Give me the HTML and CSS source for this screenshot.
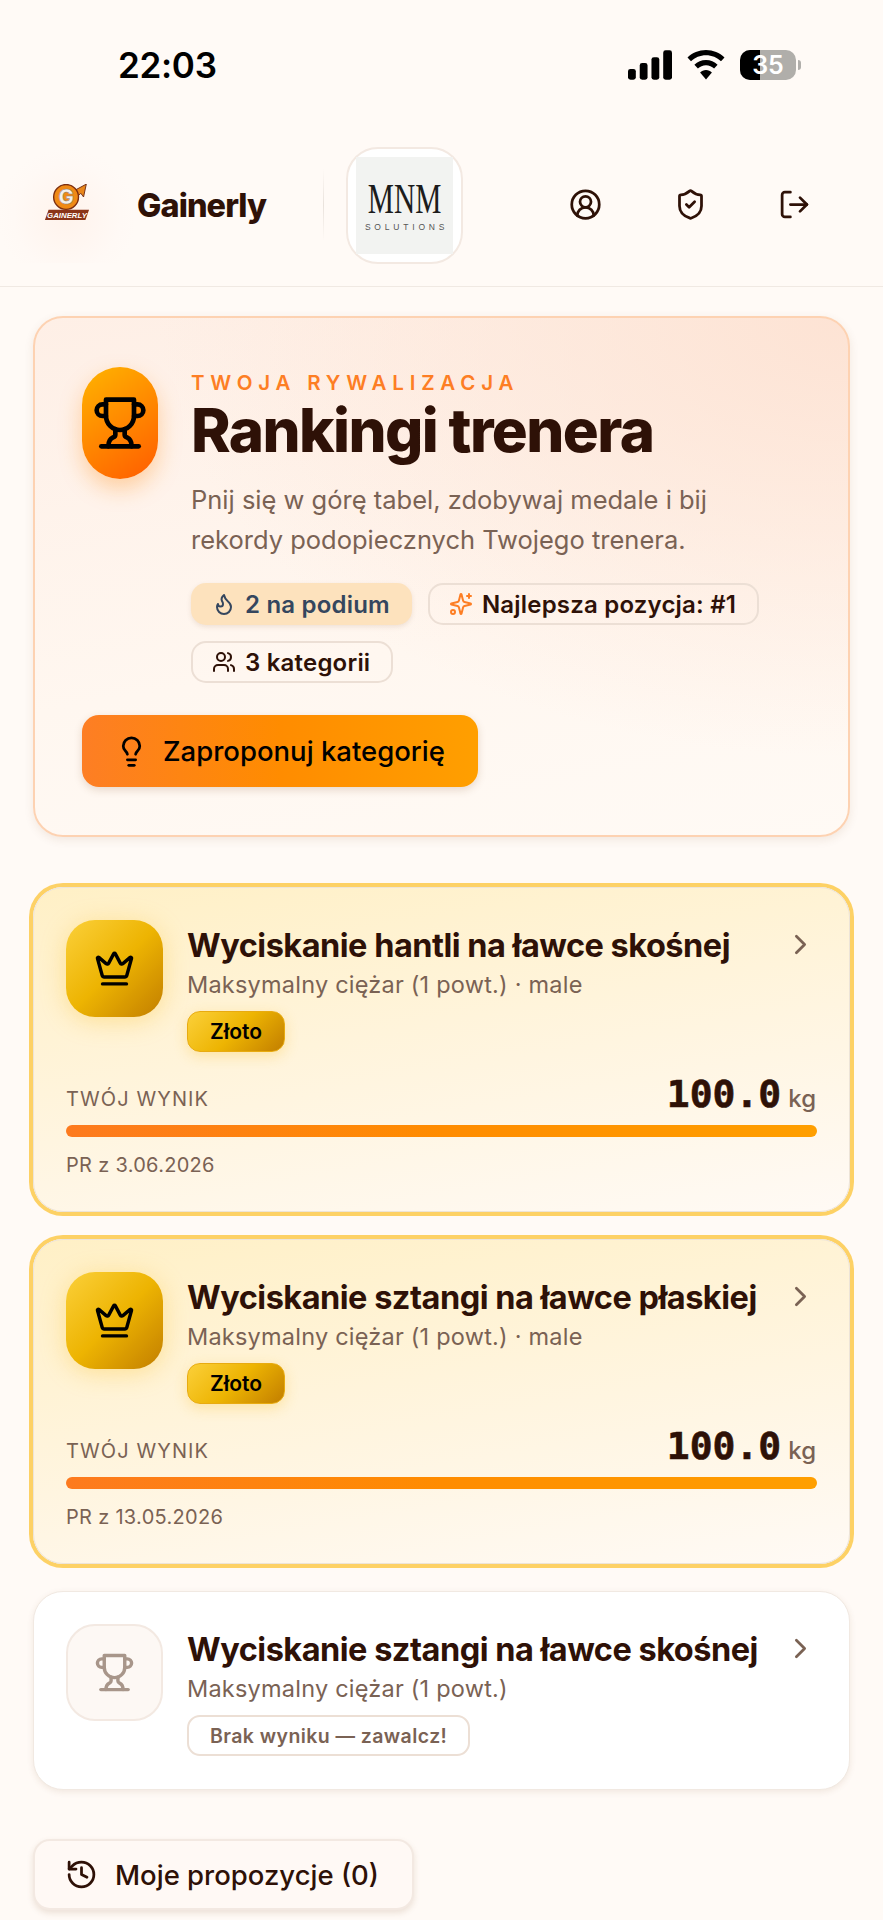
FILE: index.html
```html
<!DOCTYPE html>
<html lang="pl">
<head>
<meta charset="utf-8">
<title>Rankingi trenera</title>
<link rel="stylesheet" href="styles.css">
</head>
<body>
<svg class="defs" aria-hidden="true">
  <symbol id="trophy" viewBox="0 0 24 24"><path d="M6 9H4.5a2.5 2.5 0 0 1 0-5H6"/><path d="M18 9h1.5a2.5 2.5 0 0 0 0-5H18"/><path d="M4 22h16"/><path d="M10 14.66V17c0 .55-.47.98-.97 1.21C7.85 18.75 7 20.24 7 22"/><path d="M14 14.66V17c0 .55.47.98.97 1.21C16.15 18.75 17 20.24 17 22"/><path d="M18 2H6v7a6 6 0 0 0 12 0V2Z"/></symbol>
  <symbol id="crown" viewBox="0 0 24 24"><path d="M11.562 3.266a.5.5 0 0 1 .876 0L15.39 8.87a1 1 0 0 0 1.516.294L21.183 5.5a.5.5 0 0 1 .798.519l-2.834 10.246a1 1 0 0 1-.956.734H5.81a1 1 0 0 1-.957-.734L2.02 6.02a.5.5 0 0 1 .798-.519l4.276 3.664a1 1 0 0 0 1.516-.294z"/><path d="M5 21h14"/></symbol>
  <symbol id="chevron" viewBox="0 0 24 24"><path d="m9 18 6-6-6-6"/></symbol>
  <symbol id="flame" viewBox="0 0 24 24"><path d="M8.5 14.5A2.5 2.5 0 0 0 11 12c0-1.38-.5-2-1-3-1.072-2.143-.224-4.054 2-6 .5 2.5 2 4.9 4 6.5 2 1.6 3 3.5 3 5.5a7 7 0 1 1-14 0c0-1.153.433-2.294 1-3a2.5 2.5 0 0 0 2.5 2.5z"/></symbol>
  <symbol id="sparkles" viewBox="0 0 24 24"><path d="M9.937 15.5A2 2 0 0 0 8.5 14.063l-6.135-1.582a.5.5 0 0 1 0-.962L8.5 9.936A2 2 0 0 0 9.937 8.5l1.582-6.135a.5.5 0 0 1 .963 0L14.063 8.5A2 2 0 0 0 15.5 9.937l6.135 1.581a.5.5 0 0 1 0 .964L15.5 14.063a2 2 0 0 0-1.437 1.437l-1.582 6.135a.5.5 0 0 1-.963 0z"/><path d="M20 2v4"/><path d="M22 4h-4"/><circle cx="4" cy="20" r="2"/></symbol>
  <symbol id="users" viewBox="0 0 24 24"><path d="M16 21v-2a4 4 0 0 0-4-4H6a4 4 0 0 0-4 4v2"/><circle cx="9" cy="7" r="4"/><path d="M22 21v-2a4 4 0 0 0-3-3.87"/><path d="M16 3.13a4 4 0 0 1 0 7.75"/></symbol>
  <symbol id="bulb" viewBox="0 0 24 24"><path d="M15 14c.2-1 .7-1.7 1.5-2.5 1-.9 1.5-2.2 1.5-3.5A6 6 0 0 0 6 8c0 1 .2 2.2 1.5 3.5.7.7 1.3 1.5 1.5 2.5"/><path d="M9 18h6"/><path d="M10 22h4"/></symbol>
  <symbol id="history" viewBox="0 0 24 24"><path d="M3 12a9 9 0 1 0 9-9 9.75 9.75 0 0 0-6.74 2.74L3 8"/><path d="M3 3v5h5"/><path d="M12 7v5l4 2"/></symbol>
  <symbol id="user" viewBox="0 0 24 24"><path d="M18 20a6 6 0 0 0-12 0"/><circle cx="12" cy="10" r="4"/><circle cx="12" cy="12" r="10"/></symbol>
  <symbol id="shield" viewBox="0 0 24 24"><path d="M20 13c0 5-3.5 7.5-7.66 8.95a1 1 0 0 1-.67-.01C7.5 20.5 4 18 4 13V6a1 1 0 0 1 1-1c2 0 4.5-1.2 6.24-2.72a1.17 1.17 0 0 1 1.52 0C14.51 3.81 17 5 19 5a1 1 0 0 1 1 1z"/><path d="m9 12 2 2 4-4"/></symbol>
  <symbol id="logout" viewBox="0 0 24 24"><path d="M9 21H5a2 2 0 0 1-2-2V5a2 2 0 0 1 2-2h4"/><path d="m16 17 5-5-5-5"/><path d="M21 12H9"/></symbol>
</svg>

<div class="status">
  <span class="time">22:03</span>
  <div class="status-icons">
    <svg class="signal" viewBox="0 0 45 30"><rect x="0" y="19" width="8" height="11" rx="2.5"/><rect x="12" y="13" width="8" height="17" rx="2.5"/><rect x="24" y="7" width="8" height="23" rx="2.5"/><rect x="36" y="0" width="9" height="30" rx="2.5"/></svg>
    <svg class="wifi" viewBox="0 0 38 30"><path d="M19 0C11.800 0 5.300 2.800.5 7.400L4 11.200C7.900 7.500 13.200 5.200 19 5.200S30.100 7.500 34 11.200l3.500-3.800C32.700 2.800 26.200 0 19 0z"/><path d="M19 10c-4.500 0-8.600 1.800-11.600 4.700l3.500 3.800c2.100-2 4.900-3.300 8.100-3.300s6 1.300 8.100 3.300l3.500-3.800C27.600 11.800 23.500 10 19 10z"/><path d="M19 20c-2.300 0-4.400.9-5.900 2.400L19 29.500l5.900-7.100C23.400 20.900 21.300 20 19 20z"/></svg>
    <div class="battery"><div class="bat-body"><div class="bat-fill"></div><span class="bat-num">35</span></div><div class="bat-cap"></div></div>
  </div>
</div>

<header class="topbar">
  <div class="brand">
    <div class="brand-logo">
      <svg class="g-logo" viewBox="0 0 50 40">
        <path class="g-arrow" d="M33 7 L46 0 L43 14 L40 10 L33 17z"/>
        <circle class="g-ring" cx="24" cy="14" r="13.500"/>
        <text class="g-letter" x="24" y="22" text-anchor="middle">G</text>
        <path class="g-banner" d="M5 28H49L45 39H1z"/>
        <text class="g-name" x="25" y="36.800" text-anchor="middle">GAINERLY</text>
      </svg>
    </div>
    <span class="brand-name">Gainerly</span>
  </div>
  <div class="divider"></div>
  <div class="gym-logo">
    <div class="gym-inner">
      <span class="mnm">MNM</span>
      <span class="solutions">SOLUTIONS</span>
    </div>
  </div>
  <nav class="nav-icons">
    <svg class="ic nav-ic"><use href="#user"/></svg>
    <svg class="ic nav-ic"><use href="#shield"/></svg>
    <svg class="ic nav-ic"><use href="#logout"/></svg>
  </nav>
</header>

<main class="content">
  <section class="hero">
    <div class="hero-top">
      <div class="hero-icon"><svg class="ic hero-ic"><use href="#trophy"/></svg></div>
      <div class="hero-text">
        <div class="eyebrow">TWOJA RYWALIZACJA</div>
        <h1 class="hero-title">Rankingi trenera</h1>
        <p class="hero-sub">Pnij się w górę tabel, zdobywaj medale i bij rekordy podopiecznych Twojego trenera.</p>
        <div class="chips">
          <span class="chip chip-fill"><svg class="ic chip-ic"><use href="#flame"/></svg>2 na podium</span>
          <span class="chip"><svg class="ic chip-ic chip-orange"><use href="#sparkles"/></svg>Najlepsza pozycja: #1</span>
          <span class="chip"><svg class="ic chip-ic"><use href="#users"/></svg>3 kategorii</span>
        </div>
      </div>
    </div>
    <button class="btn-primary"><svg class="ic btn-ic"><use href="#bulb"/></svg>Zaproponuj kategorię</button>
  </section>

  <div class="cards">
    <article class="card card-gold">
      <div class="card-head">
        <div class="medal medal-gold"><svg class="ic medal-ic"><use href="#crown"/></svg></div>
        <div class="card-info">
          <h2 class="card-title">Wyciskanie hantli na ławce skośnej</h2>
          <div class="card-sub">Maksymalny ciężar (1 powt.) · male</div>
          <span class="badge badge-gold">Złoto</span>
        </div>
        <svg class="ic chev"><use href="#chevron"/></svg>
      </div>
      <div class="score-row"><span class="score-label">TWÓJ WYNIK</span><span class="score"><b class="score-num">100.0</b> <span class="score-unit">kg</span></span></div>
      <div class="bar"></div>
      <div class="pr">PR z 3.06.2026</div>
    </article>

    <article class="card card-gold">
      <div class="card-head">
        <div class="medal medal-gold"><svg class="ic medal-ic"><use href="#crown"/></svg></div>
        <div class="card-info">
          <h2 class="card-title">Wyciskanie sztangi na ławce płaskiej</h2>
          <div class="card-sub">Maksymalny ciężar (1 powt.) · male</div>
          <span class="badge badge-gold">Złoto</span>
        </div>
        <svg class="ic chev"><use href="#chevron"/></svg>
      </div>
      <div class="score-row"><span class="score-label">TWÓJ WYNIK</span><span class="score"><b class="score-num">100.0</b> <span class="score-unit">kg</span></span></div>
      <div class="bar"></div>
      <div class="pr">PR z 13.05.2026</div>
    </article>

    <article class="card">
      <div class="card-head">
        <div class="medal medal-empty"><svg class="ic medal-ic medal-ic-muted"><use href="#trophy"/></svg></div>
        <div class="card-info">
          <h2 class="card-title">Wyciskanie sztangi na ławce skośnej</h2>
          <div class="card-sub">Maksymalny ciężar (1 powt.)</div>
          <span class="badge badge-empty">Brak wyniku — zawalcz!</span>
        </div>
        <svg class="ic chev"><use href="#chevron"/></svg>
      </div>
    </article>
  </div>

  <button class="btn-secondary"><svg class="ic btn-ic"><use href="#history"/></svg>Moje propozycje (0)</button>
</main>
</body>
</html>
```

FILE: styles.css
```css
* { box-sizing: border-box; }
html, body { margin: 0; padding: 0; }
body {
  width: 883px;
  height: 1920px;
  overflow: hidden;
  background: #fffaf6;
  color: #2e1107;
  font-family: Inter, "Noto Sans", sans-serif;
}
.defs { display: none; }
.ic {
  fill: none;
  stroke: currentColor;
  stroke-width: 2;
  stroke-linecap: round;
  stroke-linejoin: round;
  flex: none;
}

/* status bar */
.status {
  height: 130px;
  display: flex;
  align-items: center;
  justify-content: space-between;
  padding: 0 82px 0 118px;
}
.time {
  font-size: 35px;
  font-weight: 600;
  color: #000;
  letter-spacing: -0.3px;
}
.status-icons { display: flex; align-items: center; gap: 15px; }
.signal { width: 44px; height: 30px; fill: #000; }
.wifi { width: 38px; height: 30px; fill: #000; }
.battery { display: flex; align-items: center; gap: 2px; }
.bat-body {
  position: relative;
  width: 56px;
  height: 30px;
  border-radius: 10px;
  background: #b0aeaa;
  overflow: hidden;
  display: flex;
  align-items: center;
  justify-content: center;
}
.bat-fill { position: absolute; inset: 0 auto 0 0; width: 20px; background: #000; }
.bat-num {
  position: relative;
  color: #fff;
  font-size: 25px;
  font-weight: 600;
  letter-spacing: 0;
}
.bat-cap { width: 3px; height: 10px; border-radius: 0 3px 3px 0; background: #b0aeaa; }

/* header */
.topbar {
  height: 157px;
  display: flex;
  align-items: flex-start;
  padding-top: 17px;
  border-bottom: 1px solid #f0e9e3;
}
.brand { display: flex; align-items: center; height: 116px; }
.brand-logo {
  width: 134px;
  height: 116px;
  padding-bottom: 6px;
  display: flex;
  align-items: center;
  justify-content: center;
  background: radial-gradient(circle at 50% 60%, #fff3ec 0, #fff9f5 55%, transparent 72%);
}
.g-logo { width: 46px; height: 37px; }
.g-arrow { fill: #e9861a; stroke: #6e2a12; stroke-width: 1; }
.g-ring { fill: #f08a16; stroke: #7c2e10; stroke-width: 1.500; }
.g-letter { font: 800 22px Inter, sans-serif; fill: #f4f0ec; stroke: #8a7f78; stroke-width: .5; }
.g-banner { fill: #8a3418; }
.g-name { font: 800 8.500px "Liberation Sans", sans-serif; font-style: italic; fill: #fff; }
.brand-name {
  margin-left: 3px;
  font-size: 32.400px;
  font-weight: 800;
  letter-spacing: -0.9px;
  color: #2e1107;
}
.divider {
  width: 1px;
  height: 72px;
  margin: 22px 22px 0 57px;
  background: linear-gradient(180deg, transparent, #e9e2dc 50%, transparent);
}
.gym-logo {
  width: 117px;
  height: 117px;
  border: 2px solid #f3e9e2;
  border-radius: 32px;
  background: #fff;
  padding: 8px;
  display: flex;
  flex: none;
}
.gym-inner {
  width: 97px;
  min-width: 0;
  background: #f2f3f1;
  display: flex;
  flex-direction: column;
  align-items: center;
  justify-content: center;
  gap: 2px;
}
.mnm {
  font-family: "Liberation Serif", serif;
  font-size: 42px;
  line-height: 40px;
  color: #1c1c1c;
  white-space: nowrap;
  transform: scaleX(.7);
}
.solutions {
  font-family: "Liberation Sans", sans-serif;
  font-size: 8.500px;
  line-height: 12px;
  letter-spacing: 3.800px;
  color: #555;
  margin-right: -3.800px;
}
.nav-icons { display: flex; margin-left: auto; padding: 41px 72px 0 0; gap: 71.500px; }
.nav-ic { width: 33px; height: 33px; color: #2e1107; }

/* content */
.content {
  padding: 29px 33px 0;
  display: flex;
  flex-direction: column;
  align-items: flex-start;
}
.hero {
  width: 817px;
  height: 521px;
  padding: 49px 47px;
  border: 2px solid #fdd2b2;
  border-radius: 30px;
  background:
    radial-gradient(ellipse at 100% 0, #fde3d4 0, transparent 60%),
    linear-gradient(170deg, #feefe6 0, #fff7f0 60%, #fffaf5 100%);
  box-shadow: 0 3px 10px rgba(120, 70, 30, .10);
}
.hero-top { display: flex; gap: 33px; }
.hero-icon {
  width: 76px;
  height: 112px;
  flex: none;
  border-radius: 38px;
  background: linear-gradient(145deg, #ffb400, #ff5c00);
  box-shadow: 0 10px 22px rgba(255, 140, 20, .35);
  display: flex;
  align-items: center;
  justify-content: center;
  color: #000;
}
.hero-ic { width: 56px; height: 56px; }
.hero-text { flex: 1; min-width: 0; }
.eyebrow {
  font-size: 20.500px;
  font-weight: 600;
  letter-spacing: 5.800px;
  line-height: 24px;
  color: #fd7e24;
  margin-top: 4px;
}
.hero-title {
  margin: 2px 0 0;
  font-size: 60px;
  font-weight: 800;
  letter-spacing: -1.600px;
  line-height: 66px;
  color: #2e1107;
}
.hero-sub {
  margin: 17px 0 0;
  font-size: 25.500px;
  line-height: 40px;
  color: #7a6254;
}
.chips { display: flex; flex-wrap: wrap; gap: 16px; margin-top: 23px; }
.chip {
  height: 42px;
  padding: 0 21px 0 19px;
  display: inline-flex;
  align-items: center;
  gap: 9px;
  border: 2px solid #ecdfd5;
  border-radius: 15px;
  font-size: 24px;
  font-weight: 600;
  letter-spacing: .2px;
  color: #2e1107;
}
.chip-fill {
  padding: 0 22px 0 21px;
  border: 0;
  background: #fde2bd;
  color: #34465e;
  box-shadow: 0 2px 5px rgba(120, 70, 30, .12);
}
.chip-ic { width: 24px; height: 24px; }
.chip-orange { color: #fd7e24; }
.btn-primary {
  display: inline-flex;
  align-items: center;
  gap: 15px;
  height: 72px;
  margin-top: 32px;
  padding: 0 33px;
  border: 0;
  border-radius: 17px;
  background: linear-gradient(90deg, #fd7e24, #ff8c00 50%, #ff9f00);
  box-shadow: 0 3px 8px rgba(120, 70, 30, .18);
  font-family: inherit;
  font-size: 27.500px;
  font-weight: 500;
  color: #000;
}
.btn-ic { width: 33px; height: 33px; }

/* cards */
.cards {
  width: 817px;
  margin-top: 50px;
  display: flex;
  flex-direction: column;
  gap: 27px;
}
.card {
  border: 1px solid #f1e9e2;
  border-radius: 30px;
  background: #fff;
  padding: 32px 32px 33px;
  box-shadow: 0 2px 6px rgba(120, 70, 30, .10);
}
.card-gold {
  height: 325px;
  border-color: #ede4d8;
  background: linear-gradient(170deg, #fff0c6 0, #fff5e0 55%, #fffaf5 100%);
  box-shadow: 0 0 0 4px #fdd165;
}
.card-head { display: flex; align-items: flex-start; }
.medal {
  width: 97px;
  height: 97px;
  flex: none;
  border-radius: 29px;
  display: flex;
  align-items: center;
  justify-content: center;
}
.medal-gold {
  background: linear-gradient(135deg, #fbd03a, #edb402 50%, #c27e00);
  box-shadow: 0 4px 24px rgba(250, 190, 30, .35);
  color: #000;
}
.medal-empty { border: 2px solid #f3e9e2; background: #fdf8f4; }
.medal-ic { width: 41px; height: 41px; }
.medal-ic-muted { color: #a8968a; }
.card-info { flex: 1; min-width: 0; margin-left: 24px; padding-top: 6px; }
.card-title {
  margin: 0;
  font-size: 32.500px;
  font-weight: 700;
  letter-spacing: -0.5px;
  line-height: 40px;
  color: #2e1107;
  white-space: nowrap;
}
.card-sub { font-size: 23.500px; letter-spacing: .22px; line-height: 30px; color: #7a6254; margin-top: 4px; }
.badge {
  display: inline-flex;
  align-items: center;
  height: 41px;
  margin-top: 11px;
  padding: 0 21px;
  border-radius: 13px;
  font-size: 19.500px;
  font-weight: 600;
}
.badge-gold {
  padding: 0 22px;
  background: linear-gradient(135deg, #fbd03a, #edb402 50%, #c27e00);
  border: 1px solid #e8ab10;
  box-shadow: 0 4px 14px rgba(250, 190, 30, .30);
  color: #000;
  font-size: 21px;
}
.badge-empty { border: 2px solid #ecdfd5; color: #7a6254; letter-spacing: .42px; }
.chev { width: 33px; height: 33px; color: #7a6254; margin: 8px 0 0; }
.score-row {
  display: flex;
  justify-content: space-between;
  align-items: flex-end;
  margin-top: 20px;
  padding-right: 1px;
}
.score-label { font-size: 20px; line-height: 24px; margin-bottom: 5px; letter-spacing: 1.100px; color: #7a6254; }
.score { font-size: 0; }
.score-num {
  font-family: "DejaVu Sans Mono", monospace;
  font-size: 38px;
  font-weight: 700;
  -webkit-text-stroke: .6px #2e1107;
  color: #2e1107;
}
.score-unit { font-size: 24px; font-weight: 500; color: #7a6254; margin-left: 7px; }
.bar {
  height: 12px;
  margin-top: 9px;
  border-radius: 6px;
  background: linear-gradient(90deg, #fd7a1e, #ff8c00 50%, #ff9f00);
}
.pr { margin-top: 16px; font-size: 20px; letter-spacing: .3px; color: #7a6254; }

.btn-secondary {
  display: inline-flex;
  align-items: center;
  gap: 17px;
  height: 71px;
  margin-top: 49px;
  padding: 0 33px 0 30px;
  border: 2px solid #f3e9e2;
  border-radius: 17px;
  background: #fff9f5;
  box-shadow: 0 3px 6px rgba(120, 70, 30, .14);
  font-family: inherit;
  font-size: 27.500px;
  font-weight: 500;
  color: #2e1107;
}
```
